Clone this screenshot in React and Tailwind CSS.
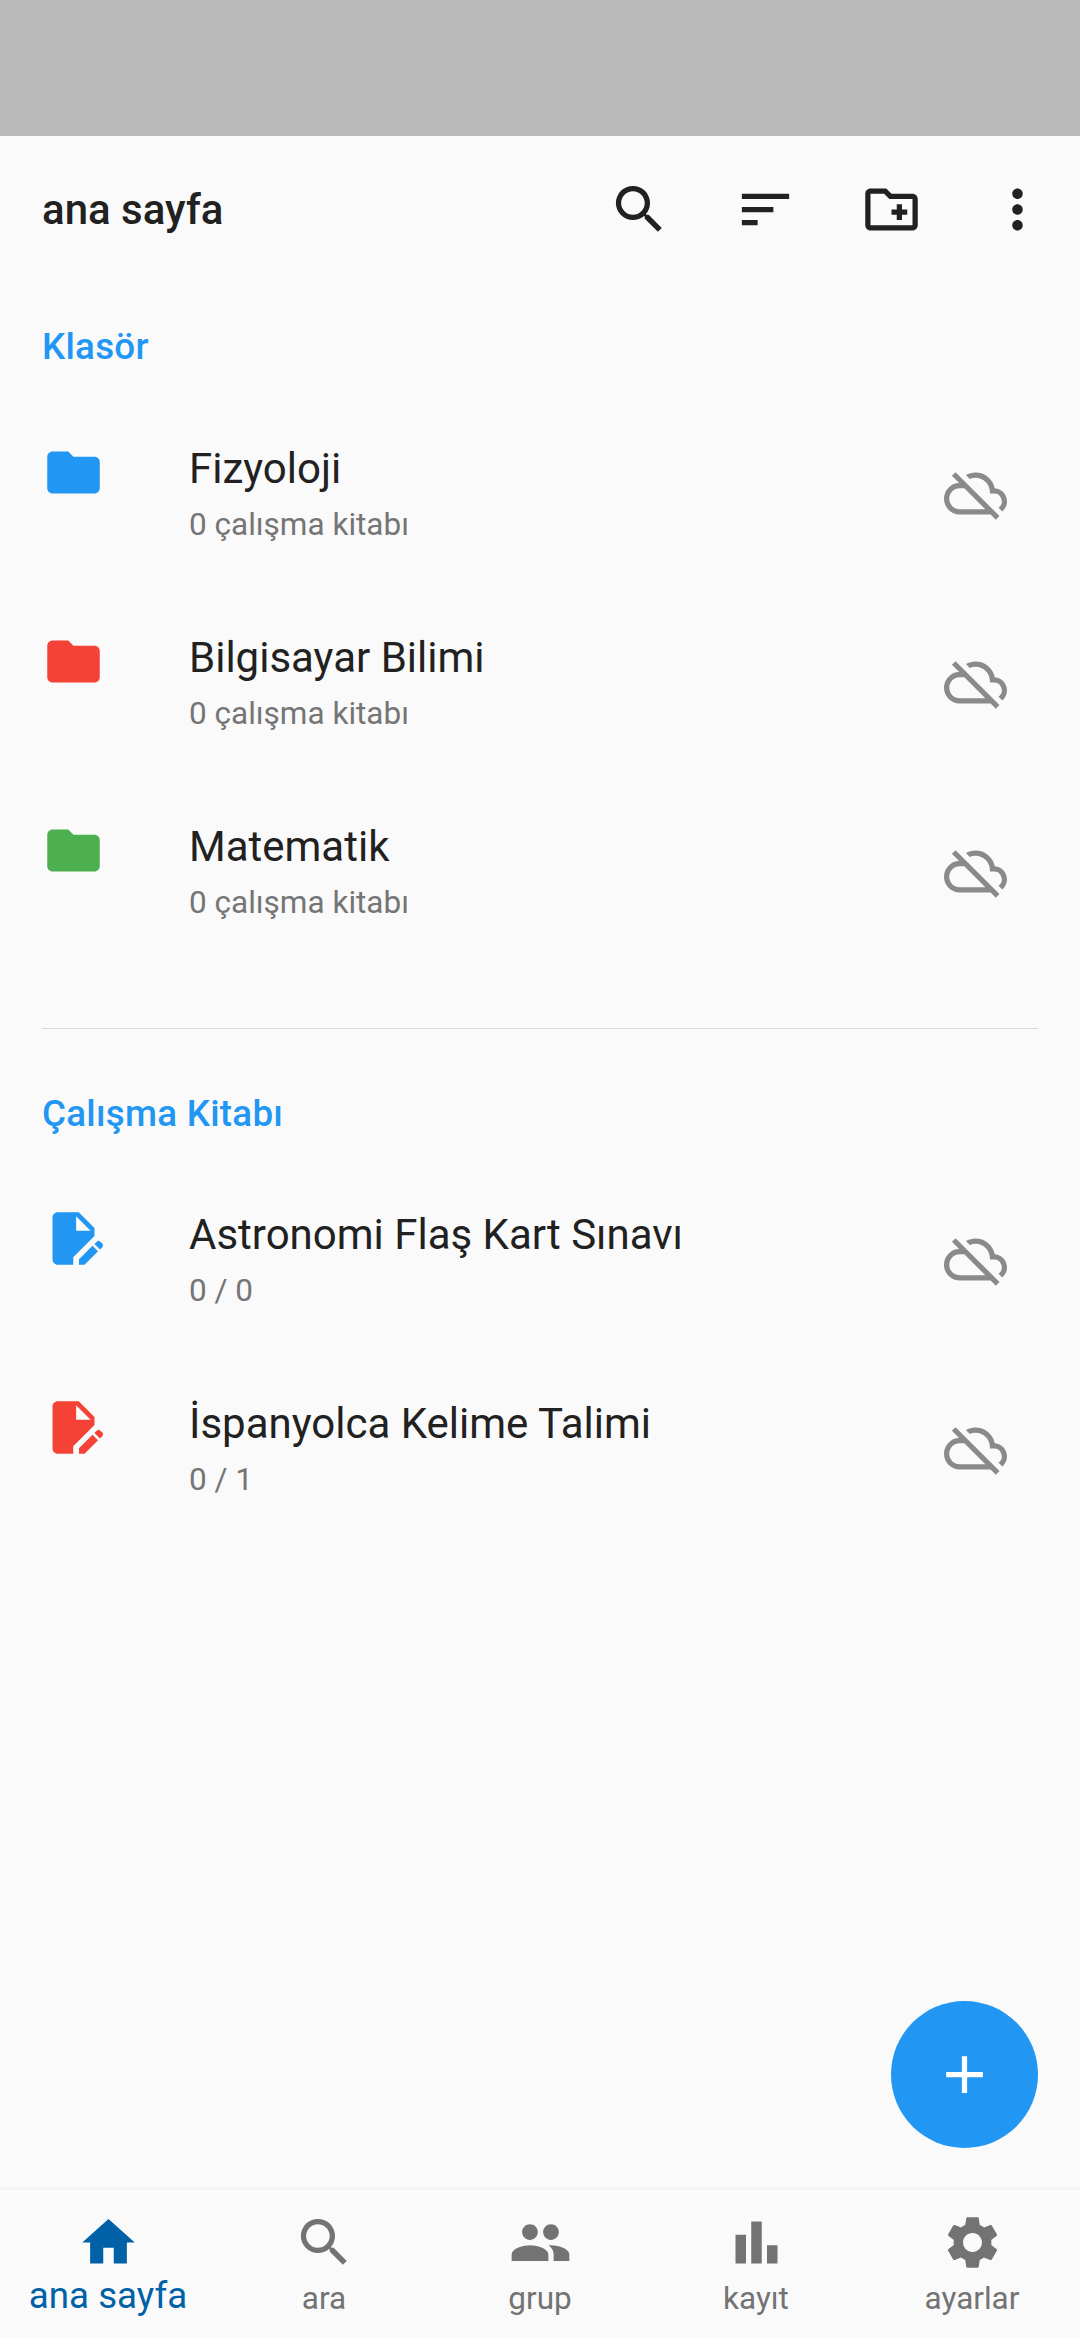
import { MdSearch, MdSort, MdOutlineCreateNewFolder, MdMoreVert, MdFolder, MdOutlineCloudOff, MdAdd, MdHome, MdGroup, MdSettings } from "react-icons/md";

const folders = [
  { name: "Fizyoloji", color: "text-[#2196f3]" },
  { name: "Bilgisayar Bilimi", color: "text-[#f44336]" },
  { name: "Matematik", color: "text-[#4caf50]" },
];

const books = [
  { name: "Astronomi Flaş Kart Sınavı", score: "0 / 0", color: "text-[#2196f3]" },
  { name: "İspanyolca Kelime Talimi", score: "0 / 1", color: "text-[#f44336]" },
];

const actions = [MdSearch, MdSort, MdOutlineCreateNewFolder, MdMoreVert];

const tabs = [
  { label: "ara", Icon: MdSearch },
  { label: "grup", Icon: MdGroup },
  { label: "kayıt", Icon: BarsIcon },
  { label: "ayarlar", Icon: MdSettings },
];

function BarsIcon({ className }) {
  return (
    <svg viewBox="0 0 24 24" fill="currentColor" className={className}>
      <path d="M4 9h4v11H4zM16 13h4v7h-4zM10 4h4v16h-4z" />
    </svg>
  );
}

function EditDocumentIcon({ className }) {
  return (
    <svg viewBox="0 0 24 24" fill="currentColor" className={className}>
      <path d="M14 2H6C4.900 2 4 2.900 4 4v16c0 1.100.900 2 2 2h5.900v-2.900L20 11V8L14 2zM13 9V3.500L18.500 9H13z" />
      <path d="M19.250 14.750l2.100 2.100L16.200 22h-2.100v-2.100z" />
      <path d="M20 14.050l.850-.850c.400-.400 1-.400 1.400 0l.700.700c.400.400.400 1 0 1.400l-.850.850z" />
    </svg>
  );
}

function SectionTitle({ className, children }) {
  return (
    <h2 className={`pl-[42px] text-[36.75px] font-medium leading-[42px] tracking-[0.26px] text-[#2196f3] ${className}`}>
      {children}
    </h2>
  );
}

function Row({ Icon, color, title, subtitle }) {
  return (
    <li className="flex h-[189px] items-center pl-[42px] pr-[73px]">
      <Icon className={`mb-[42px] size-[63px] shrink-0 ${color}`} />
      <div className="ml-[84px] flex-1 pt-[7px]">
        <div className="text-[42px] leading-[56px]">{title}</div>
        <div className="text-[31.5px] leading-[56px] text-[#757575]">{subtitle}</div>
      </div>
      <MdOutlineCloudOff className="size-[63px] text-[#8a8a8a]" />
    </li>
  );
}

export default function App() {
  return (
    <div className="flex h-[2337px] w-[1080px] flex-col bg-[#fafafa] font-['Roboto',sans-serif] text-[#212121]">
      <div className="h-[136px] shrink-0 bg-[#bababa]" />
      <header className="flex h-[147px] shrink-0 items-center pl-[42px]">
        <h1 className="flex-1 text-[42px] font-medium leading-[50px]">ana sayfa</h1>
        {actions.map((Icon, i) => (
          <button key={i} className="flex w-[126px] justify-center">
            <Icon className="size-[63px]" />
          </button>
        ))}
      </header>
      <main className="relative flex-1">
        <SectionTitle className="h-[116px] pt-[43px]">Klasör</SectionTitle>
        <ul>
          {folders.map((f) => (
            <Row key={f.name} Icon={MdFolder} color={f.color} title={f.name} subtitle="0 çalışma kitabı" />
          ))}
        </ul>
        <hr className="mx-[42px] mt-[62px] border-t border-[#dadada]" />
        <SectionTitle className="h-[136px] pt-[64px]">Çalışma Kitabı</SectionTitle>
        <ul>
          {books.map((b) => (
            <Row key={b.name} Icon={EditDocumentIcon} color={b.color} title={b.name} subtitle={b.score} />
          ))}
        </ul>
        <button className="absolute bottom-[39px] right-[42px] flex size-[147px] items-center justify-center rounded-full bg-[#2196f3] text-white">
          <MdAdd className="size-[63px]" />
        </button>
      </main>
      <nav className="grid h-[150px] shrink-0 grid-cols-5 border-t-3 border-[#f4f4f4] text-[#737373]">
        <div className="flex flex-col items-center pt-[21px] text-[#0061a6]">
          <MdHome className="size-[63px]" />
          <span className="text-[36.75px] leading-[44px]">ana sayfa</span>
        </div>
        {tabs.map(({ label, Icon }) => (
          <div key={label} className="flex flex-col items-center pt-[21px]">
            <Icon className="size-[63px]" />
            <span className="mt-[6px] text-[31.5px] leading-[38px]">{label}</span>
          </div>
        ))}
      </nav>
    </div>
  );
}
